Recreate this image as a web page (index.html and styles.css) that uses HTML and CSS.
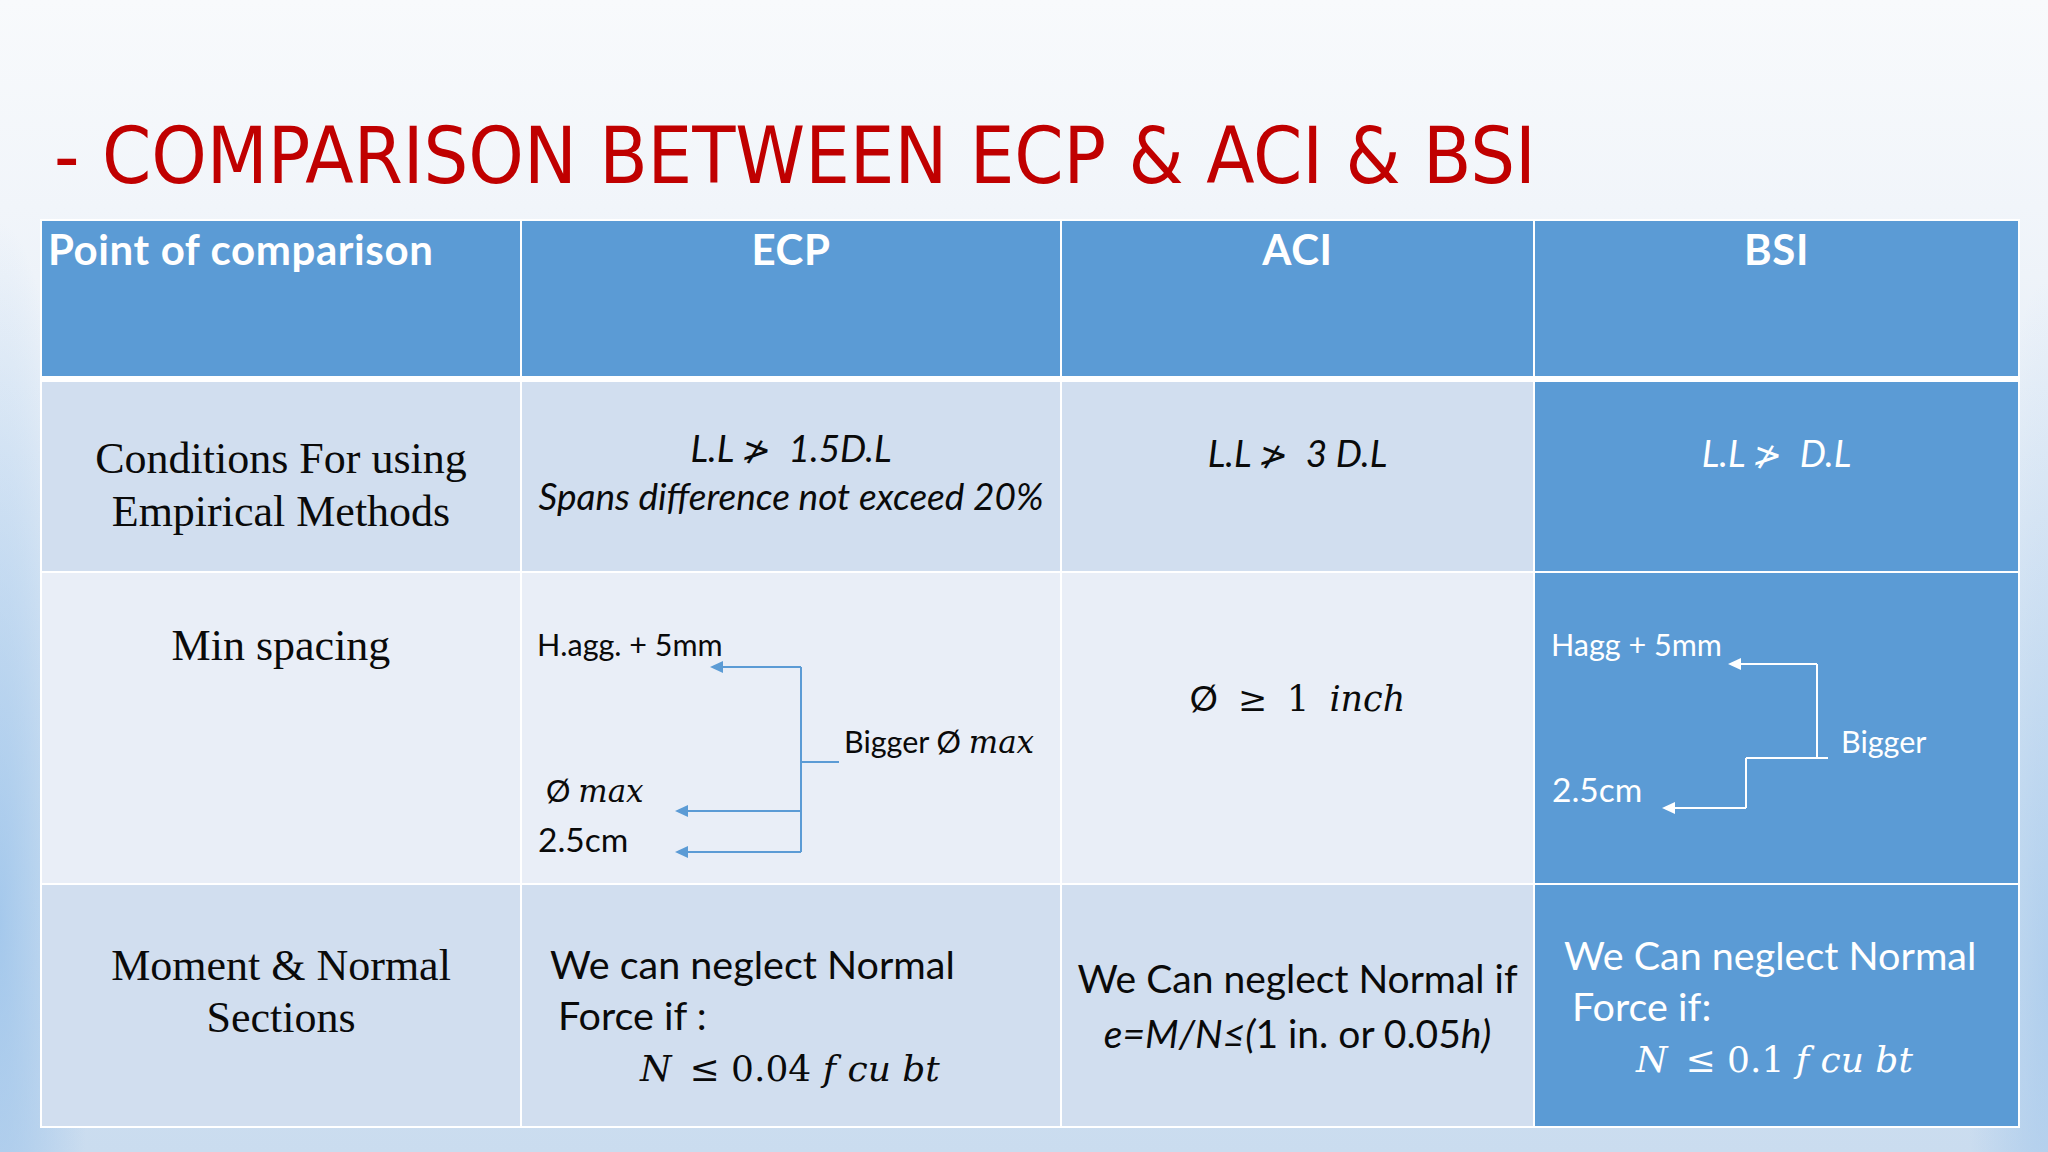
FILE: index.html
```html
<!DOCTYPE html>
<html>
<head>
<meta charset="utf-8">
<link rel="stylesheet" href="styles.css">
</head>
<body>
<div class="slide">
  <h1 class="title">- COMPARISON BETWEEN ECP &amp; ACI &amp; BSI</h1>
  <div class="table">
    <div class="cell head head-left">Point of comparison</div>
    <div class="cell head">ECP</div>
    <div class="cell head">ACI</div>
    <div class="cell head">BSI</div>

    <div class="cell r1 serif c-r1"><div>Conditions For using<br>Empirical Methods</div></div>
    <div class="cell r1 ital c-r1b"><div>L.L <span class="ngt">≯</span>&nbsp; 1.5D.L<br>Spans difference not exceed 20%</div></div>
    <div class="cell r1 ital c-r1s"><div>L.L <span class="ngt">≯</span>&nbsp; 3 D.L</div></div>
    <div class="cell blue ital c-r1s"><div>L.L <span class="ngt">≯</span>&nbsp; D.L</div></div>

    <div class="cell r2 serif c-min"><div>Min spacing</div></div>
    <div class="cell r2 diag">
      <svg class="diagram" width="538" height="310" viewBox="0 0 538 310">
        <g class="arr-ecp">
          <path d="M279 94 H198 M279 94 V279 M279 238 H163 M279 279 H163 M279 189 H317" />
          <polygon points="188,94 201,88 201,100" />
          <polygon points="153,238 166,232 166,244" />
          <polygon points="153,279 166,273 166,285" />
        </g>
        <text class="lbl" x="15" y="83">H.agg. + 5mm</text>
        <text class="lbl" x="322" y="180">Bigger Ø <tspan class="mi">max</tspan></text>
        <text class="lbl" x="24" y="229">Ø <tspan class="mi">max</tspan></text>
        <text class="lbl big" x="16" y="279">2.5cm</text>
      </svg>
    </div>
    <div class="cell r2 c-aci2"><span class="math"><span class="sym">Ø</span><span>≥</span><span>1</span><i>inch</i></span></div>
    <div class="cell blue diag">
      <svg class="diagram" width="483" height="310" viewBox="0 0 483 310">
        <g class="arr-bsi">
          <path d="M282 91 H203 M282 91 V185 M293 185 H211 M211 185 V235 M211 235 H137" />
          <polygon points="193,91 206,85 206,97" />
          <polygon points="127,235 140,229 140,241" />
        </g>
        <text class="lbl w" x="16" y="83">Hagg + 5mm</text>
        <text class="lbl w" x="306" y="180">Bigger</text>
        <text class="lbl big w" x="17" y="229">2.5cm</text>
      </svg>
    </div>

    <div class="cell r3 serif c-r3a"><div>Moment &amp; Normal<br>Sections</div></div>
    <div class="cell r3 c-r3b">
      <div class="ln">We can neglect Normal</div>
      <div class="ln ind1">Force if :</div>
      <div class="ln eq ind-ecp"><i>N</i>&ensp;≤ 0.04 <i>f cu bt</i></div>
    </div>
    <div class="cell r3 c-r3c">
      <div class="ln2">We Can neglect Normal if</div>
      <div class="ln2"><i>e=M/N≤(</i>1 in. or 0.05<i>h)</i></div>
    </div>
    <div class="cell blue c-r3d">
      <div class="ln">We Can neglect Normal</div>
      <div class="ln ind1">Force if:</div>
      <div class="ln eq ind-bsi"><i>N</i>&ensp;≤ 0.1 <i>f cu bt</i></div>
    </div>
  </div>
</div>
</body>
</html>
```

FILE: styles.css
```css
html, body {
  margin: 0;
  padding: 0;
}

body {
  width: 2048px;
  height: 1152px;
  overflow: hidden;
}

.slide {
  width: 2048px;
  height: 1152px;
  box-sizing: border-box;
  padding-top: 117px;
  background:
    radial-gradient(ellipse 90px 700px at 0% 80%, rgba(150, 192, 234, 0.75) 0%, rgba(150, 192, 234, 0) 100%),
    radial-gradient(ellipse 80px 700px at 100% 85%, rgba(150, 192, 234, 0.55) 0%, rgba(150, 192, 234, 0) 100%),
    linear-gradient(180deg, #f8fafc 0%, #f1f5fa 18%, #e3ecf6 45%, #d3e3f2 75%, #cadcef 100%);
  display: flex;
  flex-direction: column;
}

.title {
  margin: 0 0 24px 0;
  padding-left: 54px;
  font-family: "DejaVu Sans Condensed", "DejaVu Sans", sans-serif;
  font-stretch: condensed;
  font-weight: normal;
  font-size: 78.5px;
  line-height: 78px;
  color: #c00000;
  white-space: nowrap;
}

.table {
  margin-left: 40px;
  width: fit-content;
  display: grid;
  grid-template-columns: 478px 538px 471px 483px;
  grid-template-rows: 159px 189px 310px 241px;
  gap: 2px;
  padding: 2px;
  background: #ffffff;
}

.cell {
  box-sizing: border-box;
  font-family: Lato, "DejaVu Sans", sans-serif;
  color: #0a0a0a;
  display: flex;
  flex-direction: column;
  align-items: center;
  justify-content: center;
  text-align: center;
}

.head {
  margin-bottom: 4px;
  background: #5b9bd5;
  color: #ffffff;
  font-weight: bold;
  font-size: 42px;
  letter-spacing: 0.6px;
  line-height: 48px;
  justify-content: flex-start;
  padding-top: 4px;
}

.head-left {
  align-items: flex-start;
  padding-left: 6px;
}

.r1, .r3 {
  background: #d1deef;
}

.r2 {
  background: #e9eef7;
}

.blue {
  background: #5b9bd5;
  color: #ffffff;
}

.serif {
  font-family: "Liberation Serif", serif;
  font-size: 44px;
  line-height: 53px;
}

.ital {
  font-style: italic;
  font-size: 37px;
  line-height: 46px;
}

.ngt {
  font-family: "DejaVu Sans", sans-serif;
  font-style: normal;
  font-size: 35px;
  display: inline-block;
  transform: skewX(-8deg);
}

.c-r1 {
  padding-top: 16px;
}

.c-r1b {
  padding-bottom: 10px;
}

.c-r1s {
  padding-bottom: 46px;
}

.c-min {
  justify-content: flex-start;
  padding-top: 46px;
}

.diag {
  display: block;
}

.diagram {
  display: block;
}

.arr-ecp path {
  fill: none;
  stroke: #5b9bd5;
  stroke-width: 2;
}

.arr-ecp polygon {
  fill: #5b9bd5;
}

.arr-bsi path {
  fill: none;
  stroke: #ffffff;
  stroke-width: 2;
}

.arr-bsi polygon {
  fill: #ffffff;
}

.lbl {
  font-family: Lato, "DejaVu Sans", sans-serif;
  font-size: 30.5px;
  fill: #0a0a0a;
}

.lbl.big {
  font-size: 33.5px;
}

.lbl.w {
  fill: #ffffff;
}

.mi {
  font-family: "DejaVu Serif", serif;
  font-style: italic;
  font-size: 31px;
}

.c-aci2 {
  padding-bottom: 60px;
}

.math {
  display: inline-flex;
  align-items: baseline;
  gap: 20px;
  font-family: "DejaVu Serif", serif;
  font-size: 35px;
  line-height: 44px;
}

.math .sym {
  font-family: Lato, sans-serif;
}

.c-r3a {
  line-height: 52px;
  padding-bottom: 28px;
}

.c-r3b, .c-r3d {
  align-items: flex-start;
  justify-content: flex-start;
  text-align: left;
  font-size: 39.5px;
}

.c-r3b {
  padding-left: 28px;
  padding-top: 53px;
}

.c-r3d {
  padding-left: 29px;
  padding-top: 44px;
}

.ln {
  line-height: 51px;
  white-space: nowrap;
}

.ind1 {
  padding-left: 8px;
}

.eq {
  font-family: "DejaVu Serif", serif;
  font-size: 36px;
  line-height: 58px;
}

.ind-ecp {
  padding-left: 90px;
}

.ind-bsi {
  padding-left: 72px;
}

.c-r3c {
  font-size: 39px;
}

.ln2 {
  line-height: 55px;
  white-space: nowrap;
}
```
